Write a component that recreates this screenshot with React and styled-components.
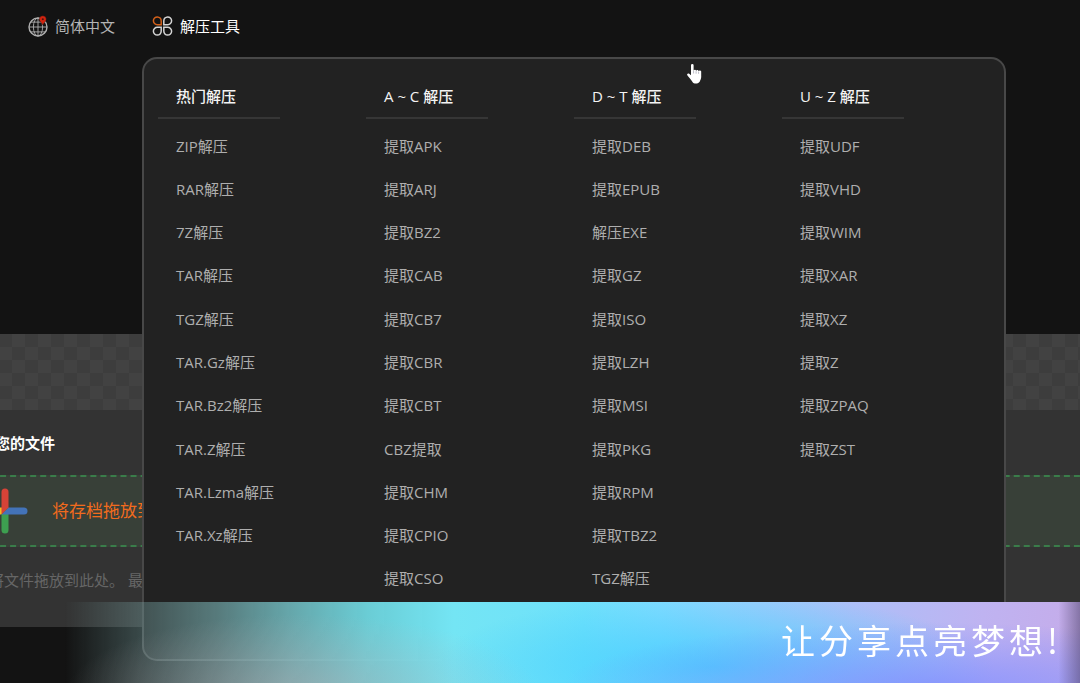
import React from "react";
import styled, { createGlobalStyle } from "styled-components";

const GlobalStyle = createGlobalStyle`
  * {
    box-sizing: border-box;
  }

  body {
    margin: 0;
    background-color: #131313;
    color: #b4b4b4;
    font-family: "Open Sans", "Noto Sans CJK SC", sans-serif;
    font-size: 15px;
    line-height: 22px;
    overflow: hidden;
  }
`;

const Page = styled.div`
  min-height: 100vh;
  overflow: hidden;
`;

const Header = styled.header`
  position: relative;
  z-index: 2;
`;

const Nav = styled.nav`
  display: flex;
  align-items: center;
  gap: 37px;
  padding: 15px 28px;
`;

const NavButton = styled.button`
  display: flex;
  align-items: center;
  gap: 7px;
  padding: 0;
  border: none;
  background: none;
  color: ${({ $active }) => ($active ? "#ffffff" : "#b4b4b4")};
  font: inherit;
  cursor: pointer;

  svg {
    flex-shrink: 0;
  }
`;

const MegaMenu = styled.div`
  position: absolute;
  top: 57px;
  left: 142px;
  width: 80%;
  display: grid;
  grid-template-columns: repeat(4, 1fr);
  padding: 26px 14px 59px;
  border: 2px solid #484848;
  border-radius: 15px;
  background-color: #222222;
`;

const MenuTitle = styled.h2`
  width: 122px;
  margin: 0 0 5px;
  padding: 0 18px 10px;
  border-bottom: 2px solid #363636;
  color: #f4f4f4;
  font-size: 15px;
  font-weight: 500;
  line-height: 22px;
  white-space: nowrap;
`;

const MenuList = styled.ul`
  display: grid;
  grid-template-rows: repeat(11, 1fr);
  align-items: center;
  min-height: 476px;
  margin: 0;
  padding: 0 18px;
  list-style: none;
`;

const MenuLink = styled.a`
  color: #aeaeae;
  text-decoration: none;
  white-space: nowrap;

  &:hover {
    color: #ffffff;
  }
`;

const Pointer = styled.svg`
  position: absolute;
  top: 63px;
  left: 686px;
`;

const Main = styled.main`
  margin: 282px -20px 0;
  background-color: #333333;
`;

const CheckerBand = styled.div`
  height: 76px;
  background: repeating-conic-gradient(#3d3d3d 0 25%, #424242 0 50%) 6px 0 / 26px 26px;
`;

const UploadTitle = styled.h1`
  margin: 0;
  padding: 22px 15px 21px;
  color: #ffffff;
  font-size: 15px;
  font-weight: 700;
  line-height: 22px;
`;

const DropZone = styled.button`
  display: flex;
  align-items: center;
  gap: 24px;
  width: 100%;
  height: 72px;
  padding: 0;
  border: 2px dashed #3a7d4a;
  background-color: #384038;
  color: #f26b1d;
  font: inherit;
  font-size: 17px;
  text-align: left;
`;

const Hint = styled.p`
  margin: 0;
  padding: 22px 9px 36px;
  color: #666666;
`;

const Banner = styled.div`
  position: fixed;
  right: 0;
  bottom: 0;
  left: 0;
  z-index: 3;
  display: flex;
  align-items: flex-start;
  justify-content: flex-end;
  height: 81px;
  padding: 14px 18px 0;
  background:
    linear-gradient(90deg, transparent 98%, rgba(80, 70, 110, 0.55) 100%),
    radial-gradient(ellipse 22% 100% at 28% 115%, rgba(190, 175, 180, 0.5), transparent),
    radial-gradient(ellipse 34% 80% at 86% 105%, rgba(128, 142, 255, 0.8), transparent),
    radial-gradient(ellipse 26% 90% at 66% 80%, rgba(64, 205, 255, 0.85), transparent),
    linear-gradient(
      90deg,
      rgba(110, 150, 150, 0) 6%,
      rgba(115, 155, 155, 0.4) 13%,
      rgba(116, 170, 172, 0.65) 20%,
      rgba(116, 195, 200, 0.83) 27%,
      rgba(112, 218, 227, 0.93) 34%,
      #74e5f4 42%,
      #6ee1fb 54%,
      #80dbff 61%,
      #93d2fd 67%,
      #adbff8 79%,
      #bfb3f1 91%,
      #c5acea 100%
    );
`;

const Slogan = styled.p`
  margin: 0;
  color: #ffffff;
  font-family: "Noto Sans CJK SC", sans-serif;
  font-size: 34px;
  letter-spacing: 4px;
  line-height: 48px;
  white-space: nowrap;
`;

const menuColumns = [
  {
    title: "热门解压",
    items: [
      "ZIP解压",
      "RAR解压",
      "7Z解压",
      "TAR解压",
      "TGZ解压",
      "TAR.Gz解压",
      "TAR.Bz2解压",
      "TAR.Z解压",
      "TAR.Lzma解压",
      "TAR.Xz解压",
    ],
  },
  {
    title: "A ~ C 解压",
    items: [
      "提取APK",
      "提取ARJ",
      "提取BZ2",
      "提取CAB",
      "提取CB7",
      "提取CBR",
      "提取CBT",
      "CBZ提取",
      "提取CHM",
      "提取CPIO",
      "提取CSO",
    ],
  },
  {
    title: "D ~ T 解压",
    items: [
      "提取DEB",
      "提取EPUB",
      "解压EXE",
      "提取GZ",
      "提取ISO",
      "提取LZH",
      "提取MSI",
      "提取PKG",
      "提取RPM",
      "提取TBZ2",
      "TGZ解压",
    ],
  },
  {
    title: "U ~ Z 解压",
    items: [
      "提取UDF",
      "提取VHD",
      "提取WIM",
      "提取XAR",
      "提取XZ",
      "提取Z",
      "提取ZPAQ",
      "提取ZST",
    ],
  },
];

const GlobeIcon = () => (
  <svg width="20" height="22" viewBox="0 0 20 22" fill="none" aria-hidden="true">
    <g stroke="#b0b0b0" strokeWidth="0.9">
      <circle cx="10" cy="12" r="9" strokeWidth="1.4" />
      <ellipse cx="10" cy="12" rx="4.6" ry="9" />
      <path d="M10 3v18M1 12h18M2.7 7.1h14.6M2.7 16.9h14.6" />
    </g>
    <path
      d="M14.8 0.8a3.5 3.5 0 0 0-3.500 3.500c0 2.300 2.500 3.200 3.500 5.900 1-2.700 3.500-3.600 3.500-5.900a3.500 3.500 0 0 0-3.500-3.500z"
      fill="#d3240f"
      stroke="#131313"
      strokeWidth="0.4"
    />
    <circle cx="14.8" cy="4.3" r="1" fill="#4a1510" />
  </svg>
);

const CloverIcon = () => (
  <svg width="21" height="20" viewBox="0 0 21 20" fill="none" strokeWidth="1.5" aria-hidden="true">
    <path d="M9.200 8.700V4.900A3.900 3.900 0 1 0 5.300 8.700z" stroke="#d2601a" />
    <g stroke="#d4d4d4">
      <path d="M11.800 8.700V4.900a3.900 3.900 0 1 1 3.900 3.800z" />
      <path d="M9.200 11.300v3.800a3.900 3.900 0 1 1-3.900-3.800z" />
      <path d="M11.800 11.300v3.800a3.900 3.900 0 1 0 3.900-3.800z" />
    </g>
  </svg>
);

const PlusIcon = () => (
  <svg width="46" height="46" viewBox="0 0 46 46" aria-hidden="true">
    <path d="M23 19.5H4a3.5 3.5 0 0 0 0 7h15.5z" fill="#f5b921" />
    <path d="M19.5 26.5V42a3.5 3.5 0 0 0 7 0V19.5z" fill="#3d9f50" />
    <path d="M26.5 19.5H42a3.5 3.5 0 0 1 0 7H19.5z" fill="#4373b8" />
    <path d="M19.5 26.5V4a3.5 3.5 0 0 1 7 0v15.5z" fill="#d64337" />
  </svg>
);

const App = () => {
  return (
    <Page>
      <GlobalStyle />
      <Header>
        <Nav>
          <NavButton type="button">
            <GlobeIcon />
            简体中文
          </NavButton>
          <NavButton type="button" $active>
            <CloverIcon />
            解压工具
          </NavButton>
        </Nav>
        <MegaMenu>
          {menuColumns.map((column) => (
            <section key={column.title}>
              <MenuTitle>{column.title}</MenuTitle>
              <MenuList>
                {column.items.map((item) => (
                  <li key={item}>
                    <MenuLink href="#">{item}</MenuLink>
                  </li>
                ))}
              </MenuList>
            </section>
          ))}
        </MegaMenu>
        <Pointer width="18" height="22" viewBox="0 0 18 22" aria-hidden="true">
          <path
            d="M5 2.2a1.3 1.3 0 0 1 2.6 0v6a1.2 1.2 0 0 1 2.5-.2 1.2 1.2 0 0 1 2.5.5 1.2 1.2 0 0 1 2.6.8V14c0 2-1 3-1.4 4.500c-1 2.400-6 2.800-7.300.5C5.500 16.800 3 14.500 1.300 12.200c-.8-1.500 1-2.400 2.200-1.300L5 12.300z"
            fill="#ffffff"
          />
          <path d="M7.600 8v2.500M10.100 8.200v2.500M12.600 8.800v2" stroke="#8f8fa3" strokeWidth="0.6" />
        </Pointer>
      </Header>
      <Main>
        <CheckerBand />
        <UploadTitle>您的文件</UploadTitle>
        <DropZone type="button">
          <PlusIcon />
          将存档拖放到
        </DropZone>
        <Hint>将文件拖放到此处。 最</Hint>
      </Main>
      <Banner>
        <Slogan>让分享点亮梦想!</Slogan>
      </Banner>
    </Page>
  );
};

export default App;
